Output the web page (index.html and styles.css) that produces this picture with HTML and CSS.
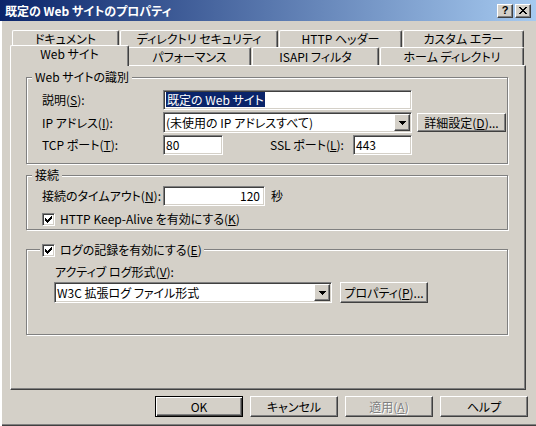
FILE: index.html
```html
<!DOCTYPE html>
<html lang="ja">
    <head>
        <meta charset="UTF-8">
        <meta name="viewport" content="width=device-width, initial-scale=1.0">
        <title>既定の Web サイトのプロパティ</title>
        <link rel="stylesheet" href="styles.css">
    </head>
    <body>

        <div class="window">
            <!-- Title Bar -->
            <div class="titlebar">
                <span class="title">既定の Web サイトのプロパティ</span>
                <div class="caption-buttons">
                    <span class="caption-btn help">?</span>
                    <span class="caption-btn close">
                        <svg width="8" height="7" viewBox="0 0 8 7" shape-rendering="crispEdges">
                            <path d="M0 0h2v1h-2z M6 0h2v1h-2z M1 1h2v1h-2z M5 1h2v1h-2z M2 2h4v1h-4z M3 3h2v1h-2z M2 4h4v1h-4z M1 5h2v1h-2z M5 5h2v1h-2z M0 6h2v1h-2z M6 6h2v1h-2z" fill="#000"/>
                        </svg>
                    </span>
                </div>
            </div>

            <div class="client">
                <!-- Tabs -->
                <div class="tab-row back">
                    <div class="tab tab-doc">ドキュメント</div>
                    <div class="tab tab-sec">ディレクトリ セキュリティ</div>
                    <div class="tab tab-http">HTTP ヘッダー</div>
                    <div class="tab tab-err">カスタム エラー</div>
                </div>
                <div class="tab-row front">
                    <div class="tab tab-web selected">Web サイト</div>
                    <div class="tab tab-perf">パフォーマンス</div>
                    <div class="tab tab-isapi">ISAPI フィルタ</div>
                    <div class="tab tab-home">ホーム ディレクトリ</div>
                </div>

                <div class="panel">
                    <!-- Web site identification -->
                    <div class="group group-ident">
                        <span class="group-title">Web サイトの識別</span>
                        <div class="row">
                            <span class="label">説明(<u>S</u>):</span>
                            <div class="edit sunken edit-desc"><span class="selection">既定の Web サイト</span></div>
                        </div>
                        <div class="row row-ip">
                            <span class="label">IP アドレス(<u>I</u>):</span>
                            <div class="combo sunken combo-ip">
                                <span class="combo-text">(未使用の IP アドレスすべて)</span>
                                <span class="combo-arrow raised">
                                    <svg width="7" height="4" viewBox="0 0 7 4" shape-rendering="crispEdges"><path d="M0 0h7v1h-7z M1 1h5v1h-5z M2 2h3v1h-3z M3 3h1v1h-1z" fill="#000"/></svg>
                                </span>
                            </div>
                            <button class="btn raised btn-advanced">詳細設定(<u>D</u>)...</button>
                        </div>
                        <div class="row row-port">
                            <span class="label">TCP ポート(<u>T</u>):</span>
                            <div class="edit sunken edit-tcp">80</div>
                            <span class="label label-ssl">SSL ポート(<u>L</u>):</span>
                            <div class="edit sunken edit-ssl">443</div>
                        </div>
                    </div>

                    <!-- Connections -->
                    <div class="group group-conn">
                        <span class="group-title">接続</span>
                        <div class="row">
                            <span class="label">接続のタイムアウト(<u>N</u>):</span>
                            <div class="edit sunken edit-timeout">120</div>
                            <span class="unit">秒</span>
                        </div>
                        <div class="row row-check">
                            <span class="checkbox sunken">
                                <svg width="7" height="7" viewBox="0 0 7 7" shape-rendering="crispEdges"><path d="M6 0h1v1h-1z M5 1h2v1h-2z M0 2h1v1h-1z M4 2h3v1h-3z M0 3h2v1h-2z M3 3h3v1h-3z M0 4h5v1h-5z M1 5h3v1h-3z M2 6h1v1h-1z" fill="#000"/></svg>
                            </span>
                            <span class="check-label">HTTP Keep-Alive を有効にする(<u>K</u>)</span>
                        </div>
                    </div>

                    <!-- Logging -->
                    <div class="group group-log">
                        <span class="group-title check-title">
                            <span class="checkbox sunken">
                                <svg width="7" height="7" viewBox="0 0 7 7" shape-rendering="crispEdges"><path d="M6 0h1v1h-1z M5 1h2v1h-2z M0 2h1v1h-1z M4 2h3v1h-3z M0 3h2v1h-2z M3 3h3v1h-3z M0 4h5v1h-5z M1 5h3v1h-3z M2 6h1v1h-1z" fill="#000"/></svg>
                            </span>
                            <span class="check-label">ログの記録を有効にする(<u>E</u>)</span>
                        </span>
                        <div class="log-label">アクティブ ログ形式(<u>V</u>):</div>
                        <div class="row row-log">
                            <div class="combo sunken combo-log">
                                <span class="combo-text">W3C 拡張ログ ファイル形式</span>
                                <span class="combo-arrow raised">
                                    <svg width="7" height="4" viewBox="0 0 7 4" shape-rendering="crispEdges"><path d="M0 0h7v1h-7z M1 1h5v1h-5z M2 2h3v1h-3z M3 3h1v1h-1z" fill="#000"/></svg>
                                </span>
                            </div>
                            <button class="btn raised btn-props">プロパティ(<u>P</u>)...</button>
                        </div>
                    </div>
                </div>

                <!-- Dialog Buttons -->
                <div class="dialog-buttons">
                    <button class="btn btn-dialog default">OK</button>
                    <button class="btn raised btn-dialog">キャンセル</button>
                    <button class="btn raised btn-dialog disabled">適用(<u>A</u>)</button>
                    <button class="btn raised btn-dialog">ヘルプ</button>
                </div>
            </div>
        </div>

    </body>
</html>
```

FILE: styles.css
```css
/* Base */
* {
  box-sizing: border-box;
}

body {
  margin: 0;
  background-color: #D4D0C8;
  font-family: "Noto Sans CJK JP", "Liberation Sans", sans-serif;
  font-size: 12px;
  font-feature-settings: "palt";
  color: #000;
}

u {
  text-decoration-thickness: 1px;
  text-underline-offset: 1px;
}

/* 3D edges */
.raised {
  background-color: #D4D0C8;
  border: 1px solid;
  border-color: #fff #404040 #404040 #fff;
  box-shadow: inset -1px -1px 0 #808080;
}

.sunken {
  background-color: #fff;
  border: 1px solid;
  border-color: #808080 #fff #fff #808080;
  box-shadow: inset 1px 1px 0 #404040, inset -1px -1px 0 #D4D0C8;
  padding: 1px;
}

/* Window */
.window {
  width: 536px;
  height: 426px;
  display: flex;
  flex-direction: column;
  box-shadow: inset 2px 0 0 #fff, inset 0 -1px 0 #404040, inset 0 -2px 0 #808080;
}

.titlebar {
  height: 21px;
  flex: 0 0 21px;
  display: flex;
  align-items: center;
  justify-content: space-between;
  padding: 0 5px;
  background: linear-gradient(to right, #0A246A, #A6CAF0);
}

.title {
  color: #fff;
  font-weight: bold;
  line-height: 14px;
}

.caption-buttons {
  display: flex;
  gap: 2px;
}

.caption-btn {
  width: 16px;
  height: 14px;
  display: flex;
  align-items: center;
  justify-content: center;
  background-color: #D4D0C8;
  border: 1px solid;
  border-color: #fff #404040 #404040 #fff;
  box-shadow: inset -1px -1px 0 #808080;
  font-family: "Liberation Sans", sans-serif;
  font-weight: bold;
  font-size: 11px;
  line-height: 1;
}

.client {
  flex: 1;
  padding: 9px 0 0 10px;
}

/* Tabs */
.tab-row {
  display: flex;
  align-items: flex-start;
  gap: 1px;
  padding-left: 2px;
}

.tab-row.back {
  height: 17px;
}

.tab-row.front {
  height: 18px;
}

.tab {
  height: 100%;
  background-color: #D4D0C8;
  border-top: 1px solid #fff;
  border-left: 1px solid #fff;
  border-right: 1px solid #404040;
  border-radius: 2px 2px 0 0;
  box-shadow: inset -1px 0 0 #808080;
  text-align: center;
  white-space: nowrap;
  line-height: 12px;
  padding-top: 3px;
  overflow: hidden;
}

.back .tab {
  padding-top: 2px;
}

.tab-doc { width: 107px; }
.tab-sec { width: 158px; }
.tab-http { width: 123px; }
.tab-err { width: 121px; }
.tab-perf { width: 123px; }
.tab-isapi { width: 127px; }
.tab-home { width: 144px; }

.front .tab.selected {
  position: relative;
  z-index: 1;
  width: 119px;
  height: 21px;
  margin: -2px -2px 0;
  padding-top: 2px;
}

/* Tab page */
.panel {
  width: 516px;
  height: 325px;
  border: 1px solid;
  border-color: #fff #404040 #404040 #fff;
  box-shadow: inset -1px -1px 0 #808080;
  padding: 11px 0 0 15px;
}

.group {
  position: relative;
  width: 482px;
  border: 1px solid #808080;
  box-shadow: inset 1px 1px 0 #fff, 1px 1px 0 #fff;
}

.group-title {
  position: absolute;
  top: -8px;
  left: 5px;
  padding: 0 3px;
  background-color: #D4D0C8;
  line-height: 14px;
  white-space: nowrap;
}

.group-ident {
  height: 87px;
  padding: 12px 0 0 15px;
}

.group-conn {
  height: 55px;
  margin-top: 11px;
  padding: 10px 0 0 15px;
}

.group-log {
  height: 86px;
  margin-top: 19px;
  padding: 15px 0 0 27px;
}

.row {
  display: flex;
  align-items: center;
}

.label {
  flex: 0 0 121px;
  line-height: 14px;
  white-space: nowrap;
}

.row-ip,
.row-port {
  margin-top: 2px;
}

/* Edit boxes */
.edit {
  height: 20px;
  padding-left: 2px;
  line-height: 16px;
  white-space: nowrap;
  overflow: hidden;
}

.edit-desc { width: 249px; }
.edit-tcp { width: 60px; }
.edit-ssl { width: 59px; }

.edit-timeout {
  width: 102px;
  text-align: right;
  padding-right: 4px;
}

.selection {
  display: inline-block;
  background-color: #0A246A;
  color: #fff;
  line-height: 15px;
  padding: 0 1px;
}

.label-ssl {
  flex: 0 0 83px;
  margin-left: 47px;
}

.unit {
  margin-left: 6px;
  line-height: 14px;
}

/* Combo boxes */
.combo {
  height: 21px;
  display: flex;
}

.combo-ip { width: 249px; }
.combo-log { width: 278px; }

.combo-text {
  flex: 1;
  padding-left: 1px;
  line-height: 17px;
  white-space: nowrap;
  overflow: hidden;
}

.combo-arrow {
  width: 16px;
  height: 17px;
  display: flex;
  align-items: center;
  justify-content: center;
}

/* Buttons */
.btn {
  font: inherit;
  font-feature-settings: "palt";
  color: #000;
  padding: 0;
  margin: 0;
  text-align: center;
  white-space: nowrap;
  line-height: 17px;
}

.btn-advanced {
  width: 89px;
  height: 19px;
  margin-left: 5px;
}

.btn-props {
  width: 88px;
  height: 21px;
  margin-left: 8px;
}

/* Check boxes */
.checkbox {
  width: 13px;
  height: 13px;
  flex: 0 0 13px;
  display: inline-flex;
  align-items: center;
  justify-content: center;
}

.row-check {
  margin-top: 5px;
  height: 16px;
}

.check-label {
  margin-left: 5px;
  line-height: 14px;
  white-space: nowrap;
}

.check-title {
  display: flex;
  align-items: center;
  left: 13px;
  padding: 0 2px;
  height: 16px;
}

.log-label {
  padding-left: 1px;
  line-height: 14px;
}

.row-log {
  margin-top: 3px;
}

/* Dialog Buttons */
.dialog-buttons {
  display: flex;
  justify-content: flex-end;
  gap: 7px;
  margin-top: 6px;
  padding-right: 8px;
}

.btn-dialog {
  width: 88px;
  height: 21px;
}

.btn-dialog.default {
  background-color: #D4D0C8;
  border: 1px solid #000;
  box-shadow: inset 1px 1px 0 #fff, inset -1px -1px 0 #404040, inset -2px -2px 0 #808080;
}

.btn-dialog.disabled {
  color: #808080;
  text-shadow: 1px 1px 0 #fff;
}
```
